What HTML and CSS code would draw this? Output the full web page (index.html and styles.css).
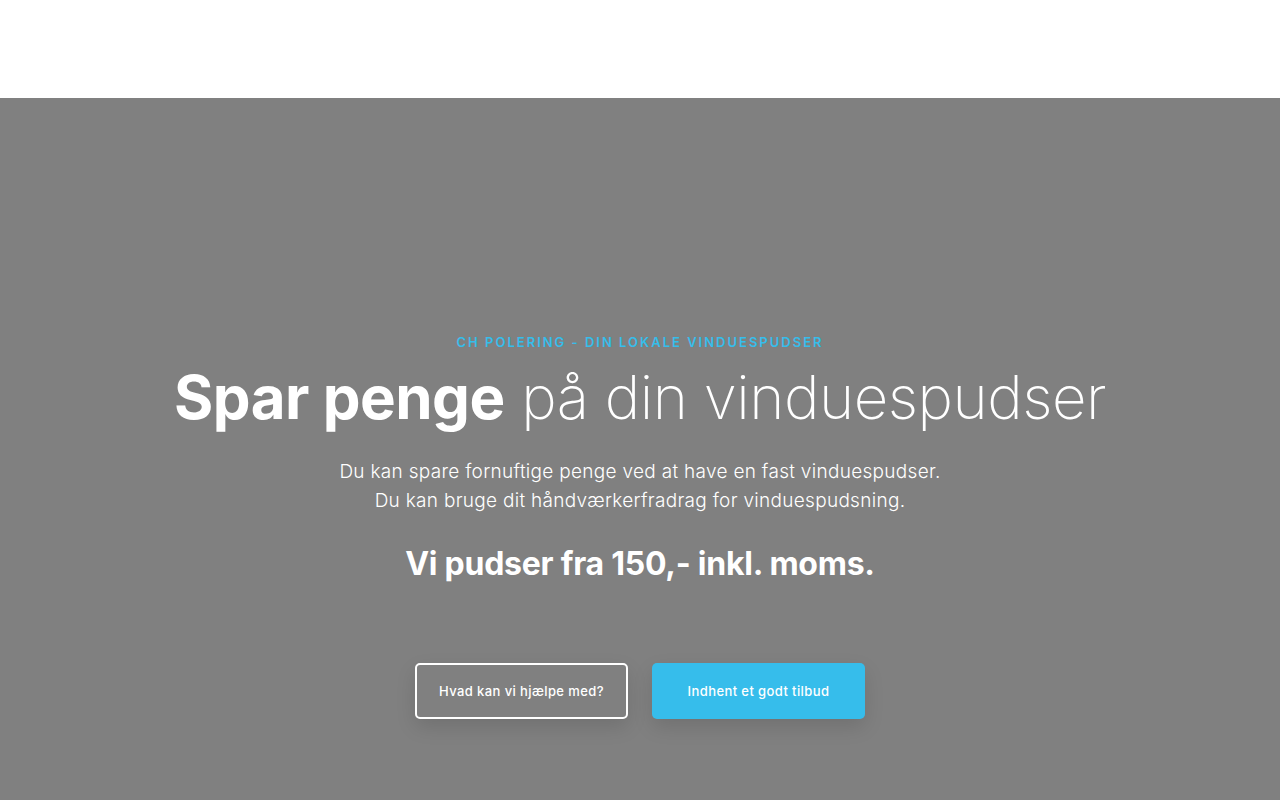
FILE: index.html
```html
<!DOCTYPE html>
<html lang="da">
<head>
    <meta charset="UTF-8">
    <meta name="viewport" content="width=device-width, initial-scale=1.0">
    <title>CH Polering</title>
    <link rel="stylesheet" href="styles.css">
</head>
<body>
    <header class="topbar"></header>

    <section class="hero">
        <div class="hero-content">
            <p class="eyebrow">CH Polering - Din lokale vinduespudser</p>
            <h1><strong>Spar penge</strong> på din vinduespudser</h1>
            <p class="lead">Du kan spare fornuftige penge ved at have en fast vinduespudser.<br>Du kan bruge dit håndværkerfradrag for vinduespudsning.</p>
            <p class="price">Vi pudser fra 150,- inkl. moms.</p>
            <div class="actions">
                <a href="#" class="btn btn-outline">Hvad kan vi hjælpe med?</a>
                <a href="#" class="btn btn-primary">Indhent et godt tilbud</a>
            </div>
        </div>
    </section>
</body>
</html>
```

FILE: styles.css
```css
body {
    font-family: "Inter", "Open Sans", sans-serif;
    margin: 0;
    background-color: #fff;
    color: #fff;
}
.topbar {
    height: 98px;
    background-color: #fff;
}
.hero {
    height: 702px;
    background-color: #808080;
    display: flex;
    justify-content: center;
}
.hero-content {
    padding-top: 234px;
    text-align: center;
}
.eyebrow {
    margin: 0;
    font-size: 13px;
    font-weight: 600;
    letter-spacing: 2px;
    text-transform: uppercase;
    color: #36bdeb;
    line-height: 20px;
}
h1 {
    margin: 5px 0 0;
    font-size: 60px;
    font-weight: 200;
    line-height: 80px;
    letter-spacing: -0.5px;
}
h1 strong {
    font-weight: 700;
}
.lead {
    margin: 20px 0 0;
    font-size: 19px;
    font-weight: 300;
    line-height: 29px;
    letter-spacing: 0.3px;
}
.price {
    margin: 29px 0 0;
    font-size: 32px;
    font-weight: 700;
    line-height: 40px;
    letter-spacing: -0.25px;
}
.actions {
    display: flex;
    justify-content: center;
    gap: 24px;
    margin-top: 79px;
}
.btn {
    box-sizing: border-box;
    width: 213px;
    height: 56px;
    display: flex;
    align-items: center;
    justify-content: center;
    font-size: 13px;
    font-weight: 500;
    letter-spacing: 0.4px;
    color: #fff;
    text-decoration: none;
    border-radius: 5px;
    box-shadow: 0 8px 20px rgba(0, 0, 0, 0.12);
}
.btn-outline {
    border: 2px solid #fff;
}
.btn-primary {
    background-color: #36bdeb;
}
```
